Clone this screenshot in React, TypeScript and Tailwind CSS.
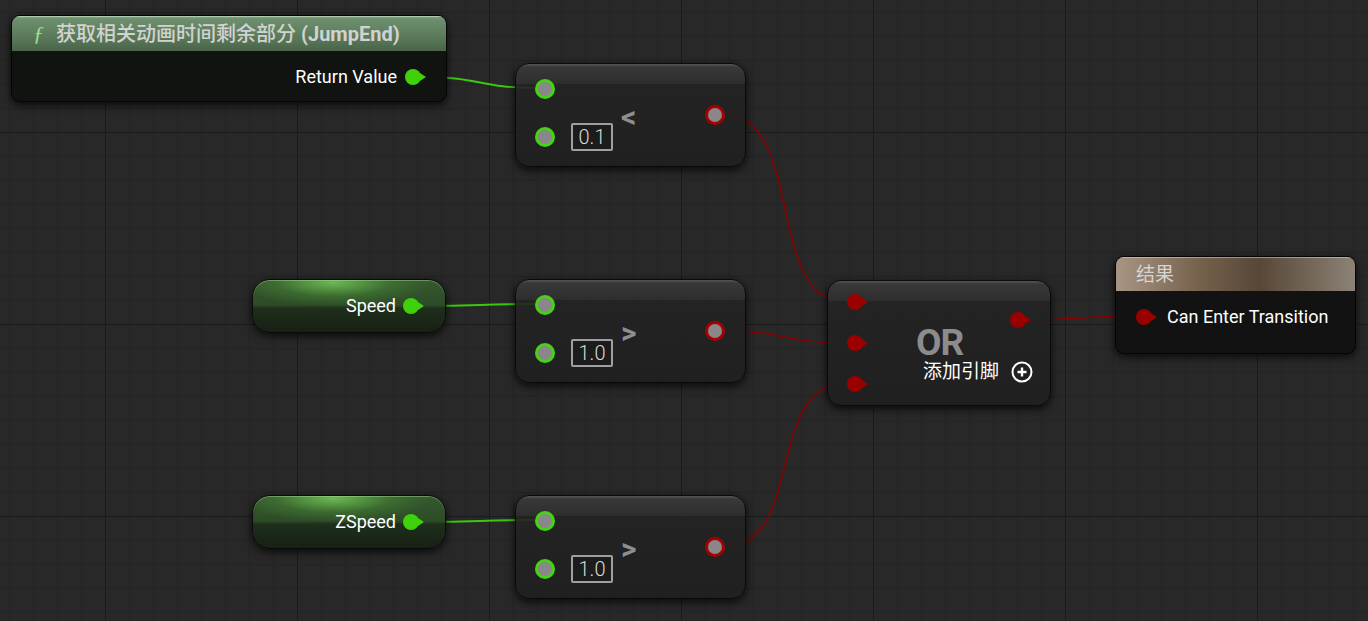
import React from 'react'

const FONT = 'font-[Roboto,"Noto_Sans_CJK_SC",sans-serif]'

function RingPin({ ring }: { ring: string }) {
  return (
    <span
      className={`block w-[20px] h-[20px] rounded-full border-[3px] bg-[#8a868a] ${ring}`}
    />
  )
}

function FilledPin({ color }: { color: 'green' | 'red' }) {
  const dot = color === 'green' ? 'bg-[#3fd10a]' : 'bg-[#9a0000]'
  const tip = color === 'green' ? 'border-l-[#3fd10a]' : 'border-l-[#9a0000]'
  return (
    <span className="flex items-center">
      <span className={`block w-4 h-4 rounded-full ${dot}`} />
      <span
        className={`block w-0 h-0 -ml-[1px] border-y-[4px] border-y-transparent border-l-[6px] ${tip}`}
      />
    </span>
  )
}

function ValueBox({ v }: { v: string }) {
  return (
    <span className="flex items-center justify-center w-[42px] h-[28px] border-2 border-[#a0a0a0] rounded-[2px] text-[20px] font-light text-[#dadada] leading-none bg-[#1c1c1c]">
      {v}
    </span>
  )
}

function CompareNode({
  x,
  y,
  op,
  value,
}: {
  x: number
  y: number
  op: string
  value: string
}) {
  return (
    <div
      className="absolute w-[231px] h-[104px] rounded-[14px] border border-[#0a0a0a] bg-[linear-gradient(to_bottom,#555555_0px,#383838_3px,#2e2e2e_20px,rgba(35,35,35,0.9)_20px,rgba(31,31,31,0.9)_100%)] shadow-[0_3px_8px_rgba(0,0,0,0.75)] flex items-start"
      style={{ left: x, top: y }}
    >
      <div className="flex flex-col pl-[19px] pt-[15px] gap-[24px]">
        <RingPin ring="border-[#45d412]" />
        <div className="flex items-center gap-[16px]">
          <RingPin ring="border-[#45d412]" />
          <ValueBox v={value} />
        </div>
      </div>
      <span className="ml-[8px] mt-[38px] text-[30px] leading-[30px] font-bold text-[#8e8e8e]">
        {op}
      </span>
      <div className="ml-auto mr-[20px] mt-[41px]">
        <RingPin ring="border-[#a60000]" />
      </div>
    </div>
  )
}

function VarNode({ x, y, label }: { x: number; y: number; label: string }) {
  return (
    <div
      className="absolute w-[194px] h-[54px] rounded-[18px] border border-[#0a0a0a] bg-[radial-gradient(ellipse_50%_45%_at_42%_5%,rgba(120,210,90,0.8),rgba(80,160,60,0.3)_60%,transparent_100%),linear-gradient(to_bottom,#36582e_0%,#2d4c27_48%,#1e2f1b_54%,#172015_100%)] shadow-[0_3px_8px_rgba(0,0,0,0.75),inset_0_1px_0_rgba(190,230,180,0.4)] flex items-center justify-end pr-[21px] gap-[7px]"
      style={{ left: x, top: y }}
    >
      <span className="text-[18px] text-white leading-none">{label}</span>
      <FilledPin color="green" />
    </div>
  )
}

export default function App() {
  return (
    <div
      className={`relative w-[1368px] h-[621px] overflow-hidden ${FONT} bg-[#282828] [background-image:linear-gradient(to_right,#1b1b1b_1px,transparent_1px),linear-gradient(to_bottom,#1b1b1b_1px,transparent_1px),linear-gradient(to_right,#232323_1px,transparent_1px),linear-gradient(to_bottom,#232323_1px,transparent_1px)] [background-size:192px_192px,192px_192px,24px_24px,24px_24px] [background-position:105px_132px,105px_132px,9px_12px,9px_12px]`}
    >
      {/* wires */}
      <svg className="absolute inset-0" width="1368" height="621" fill="none">
        <g stroke="#3cc80c" strokeWidth="2">
          <path d="M424 77 C480 77 480 88 536 88" />
          <path d="M424 306 C480 306 480 304 536 304" />
          <path d="M424 522 C480 522 480 520 536 520" />
        </g>
        <g stroke="#8c0000" strokeWidth="1.5">
          <path d="M724 115 C805 115 765 302 846 302" />
          <path d="M724 331 C785 331 785 343 846 343" />
          <path d="M724 547 C805 547 765 383 846 383" />
          <path d="M1028 320 C1080 320 1080 316 1134 316" />
        </g>
      </svg>

      {/* function call node */}
      <div className="absolute left-[11px] top-[15px] w-[436px] h-[87px] rounded-[9px] border border-[#050505] overflow-hidden bg-[#101310] shadow-[0_3px_8px_rgba(0,0,0,0.75)] flex flex-col">
        <div className="h-[35px] flex items-center pl-[21px] gap-[12px] bg-[linear-gradient(to_bottom,#8aa88a_0px,#6e8f6e_3px,#5a7a5a_60%,#4a644a_100%)] shadow-[inset_0_1px_0_rgba(220,240,220,0.5)]">
          <span className="text-[22px] italic text-[#9be08f] font-[Liberation_Serif,serif] leading-none">
            ƒ
          </span>
          <span className="text-[20px] font-medium text-[#d2d2d2] leading-none whitespace-nowrap">
            获取相关动画时间剩余部分 <span className="font-bold">(JumpEnd)</span>
          </span>
        </div>
        <div className="flex-1 flex items-start justify-end pr-[20px] pt-[16px] gap-[8px]">
          <span className="text-[18px] text-white leading-[20px]">Return Value</span>
          <span className="mt-[2px]">
            <FilledPin color="green" />
          </span>
        </div>
      </div>

      <VarNode x={252} y={279} label="Speed" />
      <VarNode x={252} y={495} label="ZSpeed" />

      <CompareNode x={515} y={63} op="<" value="0.1" />
      <CompareNode x={515} y={279} op=">" value="1.0" />
      <CompareNode x={515} y={495} op=">" value="1.0" />

      {/* OR node */}
      <div className="absolute left-[827px] top-[280px] w-[224px] h-[126px] rounded-[14px] border border-[#0a0a0a] bg-[linear-gradient(to_bottom,#555555_0px,#383838_3px,#2e2e2e_20px,rgba(35,35,35,0.9)_20px,rgba(31,31,31,0.9)_100%)] shadow-[0_3px_8px_rgba(0,0,0,0.75)] flex items-start">
        <div className="flex flex-col pl-[19px] pt-[13px] gap-[25px]">
          <FilledPin color="red" />
          <FilledPin color="red" />
          <FilledPin color="red" />
        </div>
        <div className="flex-1 flex flex-col pt-[31px]">
          <div className="flex justify-end pr-[19px]">
            <FilledPin color="red" />
          </div>
          <span className="ml-[48px] mt-[1px] text-[37px] leading-[28px] font-bold tracking-[-1px] text-[#8c8c8c]">
            OR
          </span>
          <div className="ml-[55px] mt-[3px] flex items-center gap-[12px]">
            <span className="text-[19px] leading-[24px] text-white">添加引脚</span>
            <svg width="22" height="22" viewBox="0 0 22 22" fill="none" stroke="white" strokeWidth="2">
              <circle cx="11" cy="11" r="9.5" />
              <path d="M11 6.5v9M6.5 11h9" strokeWidth="2.4" />
            </svg>
          </div>
        </div>
      </div>

      {/* result node */}
      <div className="absolute left-[1115px] top-[256px] w-[241px] h-[98px] rounded-[9px] border border-[#050505] overflow-hidden bg-[#111211] shadow-[0_3px_8px_rgba(0,0,0,0.75)] flex flex-col">
        <div className="h-[34px] flex items-center pl-[20px] bg-[linear-gradient(to_right,#a89684_0%,#75614c_35%,#574737_60%,#8c8276_100%)] shadow-[inset_0_1px_0_rgba(240,230,220,0.45)]">
          <span className="text-[19px] text-[#d4d4d4] leading-none">结果</span>
        </div>
        <div className="flex items-center pl-[20px] pt-[17px] gap-[10px]">
          <FilledPin color="red" />
          <span className="text-[18px] text-white leading-none">Can Enter Transition</span>
        </div>
      </div>
    </div>
  )
}
